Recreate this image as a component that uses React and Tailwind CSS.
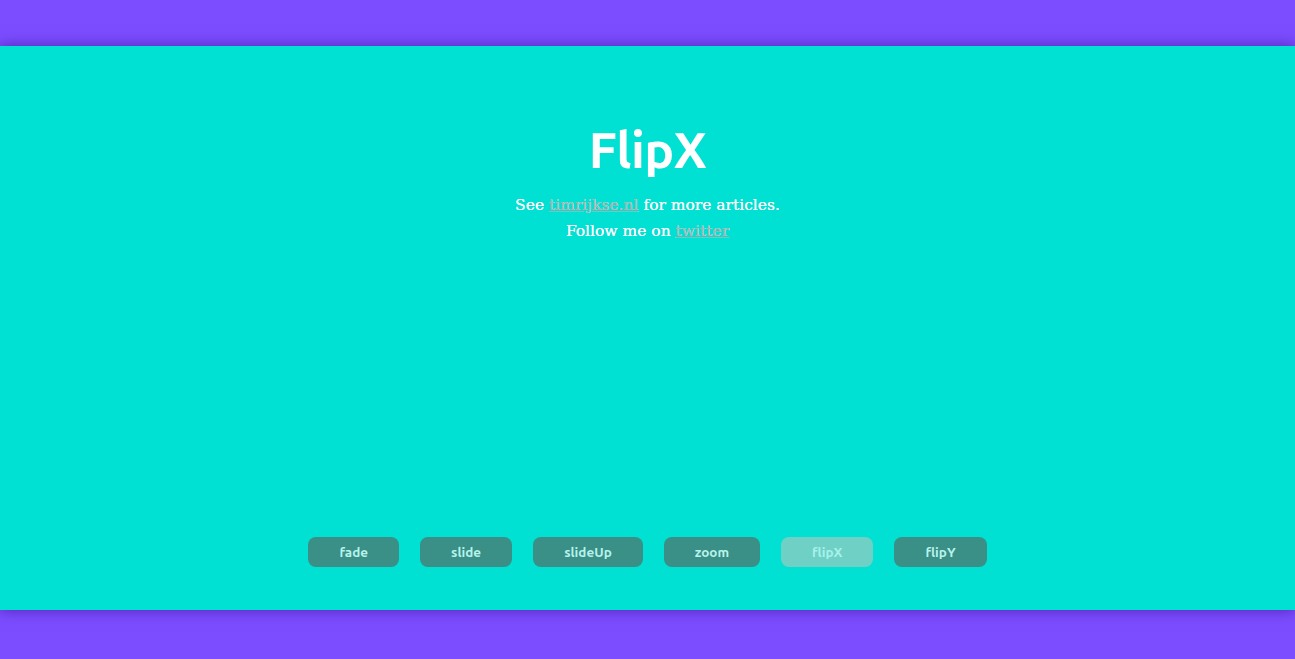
export default function App() {
  const btns = ["fade", "slide", "slideUp", "zoom", "flipX", "flipY"];
  return (
    <div className="w-[1295px] h-[659px] bg-[#7c4dff] overflow-hidden pt-[46px]">
      <div className="h-[564px] bg-[#00e0d3] shadow-[0_0_14px_rgba(40,0,120,0.55)] flex flex-col items-center">
        <h1
          className="mt-[73px] text-white font-bold text-[50px] leading-[60px] tracking-[-0.5px]"
          style={{ fontFamily: "Ubuntu, 'Open Sans', 'Noto Sans', sans-serif" }}
        >
          FlipX
        </h1>
        <div
          className="mt-[13px] text-center text-white text-[15.5px] leading-[26px] [text-shadow:0_0_0.4px_#fff]"
          style={{ fontFamily: "'DejaVu Serif', 'Liberation Serif', serif" }}
        >
          <p>
            See <a className="text-[#9fb3b1] underline">timrijkse.nl</a> for more articles.
          </p>
          <p>
            Follow me on <a className="text-[#9fb3b1] underline">twitter</a>
          </p>
        </div>
        <div className="mt-auto mb-[43px] flex gap-[21px]">
          {btns.map((b) => (
            <button
              key={b}
              className={
                "h-[30px] rounded-[8px] px-[31px] text-[13.5px] font-bold " +
                (b === "flipX"
                  ? "bg-[#6fd0c6] text-[#a6f2ea]"
                  : "bg-[#3a8f86] text-[#b5f3ec]")
              }
              style={{ fontFamily: "Ubuntu, 'Open Sans', 'Noto Sans', sans-serif" }}
            >
              {b}
            </button>
          ))}
        </div>
      </div>
    </div>
  );
}
